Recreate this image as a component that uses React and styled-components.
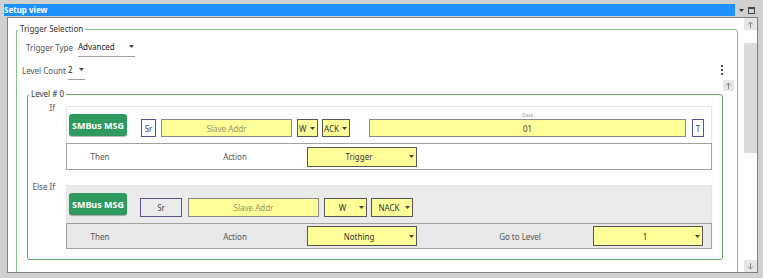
import React from "react";
import styled, { createGlobalStyle } from "styled-components";

const GlobalStyle = createGlobalStyle`
  html, body {
    margin: 0;
    padding: 0;
  }
  body {
    font-family: "Noto Sans", "Open Sans", sans-serif;
    font-size: 8px;
    color: #333;
    background: #cbcbcb;
  }
  * {
    box-sizing: border-box;
  }
`;

const Window = styled.div`
  width: 763px;
  height: 278px;
  padding: 4px 0 0 4px;
  background: #d0d0d0;
  overflow: hidden;
`;

const TitleRow = styled.div`
  display: flex;
  height: 12px;
`;

const TitleBar = styled.div`
  width: 731px;
  background: #1e90ff;
  color: #fff;
  font-weight: 700;
  line-height: 12px;
`;

const TitleButtons = styled.div`
  display: flex;
  align-items: center;
  gap: 4px;
  padding-left: 4px;
`;

const Content = styled.div`
  display: flex;
  width: 751px;
  height: 256px;
  margin: 1px 0 0 3px;
  border: 1px solid #808080;
  background: #fff;
`;

const ScrollArea = styled.div`
  flex: 1;
  overflow: hidden;
  padding: 5px 6px 0 8px;
`;

const ScrollBar = styled.div`
  width: 13px;
  display: flex;
  flex-direction: column;
`;

const ScrollBtn = styled.div`
  height: ${(p) => p.$h || 12}px;
  width: ${(p) => p.$w || "100%"};
  display: flex;
  align-items: center;
  justify-content: center;
  background: #e6e6e6;
`;

const ScrollGap = styled.div`
  height: ${(p) => p.$h}px;
  flex: ${(p) => (p.$grow ? 1 : "none")};
`;

const Thumb = styled.div`
  height: 110px;
  background: #dadada;
`;

const GroupSet = styled.fieldset`
  margin: ${(p) => p.$mt || 0}px 0 0 0;
  padding: 0;
  min-inline-size: 0;
  border: 1px solid ${(p) => p.$line};
  border-radius: 3px;
  flex: 1;
`;

const Legend = styled.legend`
  margin-left: 1px;
  padding: 0 2px;
  line-height: 12px;
  color: #333;
`;

const SetBody = styled.div`
  padding: 0 3px 40px 0;
`;

const FieldRow = styled.div`
  display: flex;
  align-items: center;
  justify-content: space-between;
  height: 20px;
  margin-top: ${(p) => p.$mt}px;
`;

const FieldGroup = styled.div`
  display: flex;
  align-items: center;
  height: 100%;
  margin-left: ${(p) => p.$ml}px;
  gap: ${(p) => p.$gap}px;
`;

const FieldLabel = styled.span`
  color: #555;
`;

const Combo = styled.div`
  display: flex;
  align-items: center;
  justify-content: space-between;
  width: ${(p) => p.$w}px;
  height: 100%;
  padding-right: 1px;
  border-bottom: 1px solid #a0a0a0;
  color: #222;
`;

const Kebab = styled.div`
  display: flex;
  flex-direction: column;
  gap: 1.5px;
  margin-right: 11px;
  span {
    width: 2.5px;
    height: 2.5px;
    border-radius: 50%;
    background: #111;
  }
`;

const LevelsArea = styled.div`
  display: flex;
  align-items: flex-start;
  padding-left: 10px;
`;

const LevelBody = styled.div`
  display: grid;
  grid-template-columns: 29px 1fr;
  column-gap: 9px;
  row-gap: 15px;
  padding: 6px 10px 10px 0;
`;

const CondLabel = styled.div`
  text-align: right;
  padding-right: 2px;
  margin-top: -4px;
  line-height: 12px;
  color: #555;
`;

const CondBlock = styled.div`
  display: flex;
  flex-direction: column;
`;

const MsgRow = styled.div`
  display: flex;
  align-items: flex-end;
  height: ${(p) => p.$h}px;
  padding: 0 0 6px 2px;
  background: ${(p) => p.$bg};
  border: 1px solid #e4e4e4;
  border-bottom: none;
`;

const MsgButton = styled.div`
  width: 58px;
  height: 22px;
  margin-bottom: ${(p) => p.$mb}px;
  display: flex;
  align-items: center;
  justify-content: center;
  background: #2f9a5e;
  border-radius: 3px;
  box-shadow: 0 1px 1px rgba(0, 0, 0, 0.3);
  color: #fff;
  font-weight: 700;
  font-size: 9px;
`;

const SrBox = styled.div`
  width: ${(p) => p.$w}px;
  height: ${(p) => p.$h}px;
  margin-left: ${(p) => p.$ml}px;
  display: flex;
  align-items: center;
  justify-content: center;
  border: 1px solid #56568c;
  background: ${(p) => p.$bg};
  color: #444;
`;

const YellowField = styled.div`
  width: ${(p) => p.$w}px;
  height: ${(p) => p.$h}px;
  margin-left: ${(p) => p.$ml || 0}px;
  display: flex;
  align-items: center;
  justify-content: center;
  background: #ffff99;
  border: 1px solid #8a8a8a;
  color: ${(p) => p.$color || "#444"};
`;

const DataWrap = styled.div`
  display: flex;
  flex-direction: column;
  align-items: center;
  margin-left: ${(p) => p.$ml}px;
`;

const DataLabel = styled.div`
  font-size: 5px;
  line-height: 6px;
  color: #9a9a9a;
  margin-bottom: 1px;
`;

const Drop = styled.div`
  width: ${(p) => p.$w}px;
  height: ${(p) => p.$h}px;
  margin-left: ${(p) => p.$ml || 0}px;
  display: flex;
  align-items: center;
  padding: 0 2px 0 1px;
  background: #ffff99;
  border: 1px solid #555;
  color: #333;
  span {
    flex: 1;
    text-align: ${(p) => (p.$center ? "center" : "left")};
  }
`;

const ThenRow = styled.div`
  display: grid;
  grid-template-columns: 66px 174px 110px 176px 110px;
  align-items: center;
  height: ${(p) => p.$h}px;
  border: 1px solid #a0a0a0;
  background: ${(p) => p.$bg};
`;

const ThenCell = styled.div`
  text-align: center;
  padding-left: ${(p) => p.$pl || 0}px;
  color: #555;
`;

const Arrow = () => (
  <svg width="5" height="3" viewBox="0 0 5 3">
    <path d="M0 0h5L2.5 3z" fill="#444" />
  </svg>
);

const ScrollArrow = ({ down }) => (
  <svg width="7" height="7" viewBox="0 0 7 7" style={down ? { transform: "rotate(180deg)" } : undefined}>
    <path d="M3.5 7V1M1 3.5l2.5-2.5 2.5 2.5" stroke="#888" strokeWidth="1" fill="none" />
  </svg>
);

const DropDown = ({ w, h, ml, center, children }) => (
  <Drop $w={w} $h={h} $ml={ml} $center={center}>
    <span>{children}</span>
    <Arrow />
  </Drop>
);

const blocks = [
  {
    label: "If",
    bg: "#fff",
    msgH: 37,
    thenH: 27,
    fh: 18,
    btnMb: 1,
  },
  {
    label: "Else If",
    bg: "#ebebeb",
    msgH: 38,
    thenH: 26,
    fh: 19,
    btnMb: 2,
  },
];

const IfMessage = ({ b }) => (
  <MsgRow $h={b.msgH} $bg={b.bg}>
    <MsgButton $mb={b.btnMb}>SMBus MSG</MsgButton>
    <SrBox $w={15} $h={b.fh} $ml={14} $bg="#fff">Sr</SrBox>
    <YellowField $w={131} $h={b.fh} $ml={5} $color="#96966a">Slave Addr</YellowField>
    <DropDown w={21} h={b.fh} ml={5}>W</DropDown>
    <DropDown w={28} h={b.fh} ml={4}>ACK</DropDown>
    <DataWrap $ml={19}>
      <DataLabel>Data</DataLabel>
      <YellowField $w={317} $h={b.fh}>01</YellowField>
    </DataWrap>
    <SrBox $w={12} $h={b.fh} $ml={6} $bg="#fff">T</SrBox>
  </MsgRow>
);

const ElseMessage = ({ b }) => (
  <MsgRow $h={b.msgH} $bg={b.bg}>
    <MsgButton $mb={b.btnMb}>SMBus MSG</MsgButton>
    <SrBox $w={42} $h={b.fh} $ml={13} $bg="#ebebeb">Sr</SrBox>
    <YellowField $w={131} $h={b.fh} $ml={6} $color="#96966a">Slave Addr</YellowField>
    <DropDown w={43} h={b.fh} ml={5} center>W</DropDown>
    <DropDown w={42} h={b.fh} ml={4} center>NACK</DropDown>
  </MsgRow>
);

export default function App() {
  const [ifBlock, elseBlock] = blocks;
  return (
    <>
      <GlobalStyle />
      <Window>
        <TitleRow>
          <TitleBar>Setup view</TitleBar>
          <TitleButtons>
            <svg width="5" height="3" viewBox="0 0 5 3">
              <path d="M0 0h5L2.5 3z" fill="#333" />
            </svg>
            <svg width="7" height="7" viewBox="0 0 7 7">
              <rect x="0.5" y="0.5" width="6" height="6" fill="none" stroke="#444" />
              <rect x="0.5" y="0.5" width="6" height="1.5" fill="#444" />
            </svg>
          </TitleButtons>
        </TitleRow>
        <Content>
          <ScrollArea>
            <GroupSet $line="#86c086">
              <Legend>Trigger Selection</Legend>
              <SetBody>
                <FieldRow $mt={2}>
                  <FieldGroup $ml={9} $gap={5}>
                    <FieldLabel>Trigger Type</FieldLabel>
                    <Combo $w={57}>
                      Advanced
                      <Arrow />
                    </Combo>
                  </FieldGroup>
                </FieldRow>
                <FieldRow $mt={3}>
                  <FieldGroup $ml={5} $gap={2}>
                    <FieldLabel>Level Count</FieldLabel>
                    <Combo $w={17}>
                      2
                      <Arrow />
                    </Combo>
                  </FieldGroup>
                  <Kebab>
                    <span />
                    <span />
                    <span />
                  </Kebab>
                </FieldRow>
                <LevelsArea>
                  <GroupSet $line="#5fab5f" $mt={8}>
                    <Legend>Level # 0</Legend>
                    <LevelBody>
                      <CondLabel>{ifBlock.label}</CondLabel>
                      <CondBlock>
                        <IfMessage b={ifBlock} />
                        <ThenRow $h={ifBlock.thenH} $bg={ifBlock.bg}>
                          <ThenCell>Then</ThenCell>
                          <ThenCell $pl={30}>Action</ThenCell>
                          <DropDown w={110} h={20} center>Trigger</DropDown>
                        </ThenRow>
                      </CondBlock>
                      <CondLabel>{elseBlock.label}</CondLabel>
                      <CondBlock>
                        <ElseMessage b={elseBlock} />
                        <ThenRow $h={elseBlock.thenH} $bg="#e8e8e8">
                          <ThenCell>Then</ThenCell>
                          <ThenCell $pl={30}>Action</ThenCell>
                          <DropDown w={110} h={20} center>Nothing</DropDown>
                          <ThenCell $pl={30}>Go to Level</ThenCell>
                          <DropDown w={110} h={20} center>1</DropDown>
                        </ThenRow>
                      </CondBlock>
                    </LevelBody>
                  </GroupSet>
                  <ScrollBtn $h={11} $w="11px">
                    <ScrollArrow />
                  </ScrollBtn>
                </LevelsArea>
              </SetBody>
            </GroupSet>
          </ScrollArea>
          <ScrollBar>
            <ScrollBtn>
              <ScrollArrow />
            </ScrollBtn>
            <ScrollGap $h={13} />
            <Thumb />
            <ScrollGap $grow />
            <ScrollBtn>
              <ScrollArrow down />
            </ScrollBtn>
          </ScrollBar>
        </Content>
      </Window>
    </>
  );
}
